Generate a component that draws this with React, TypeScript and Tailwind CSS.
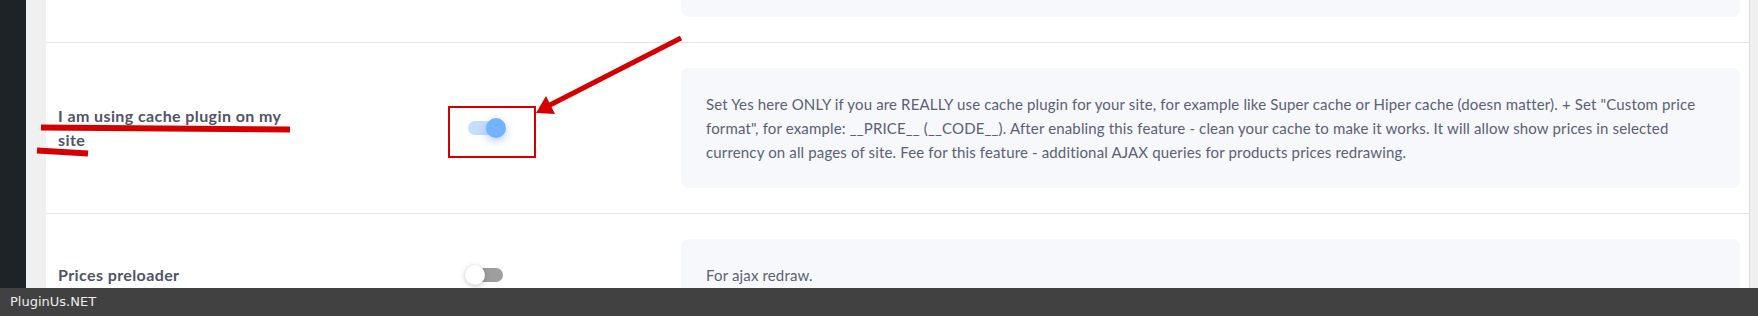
import React from "react";

function Toggle({ on }: { on: boolean }) {
  return (
    <div className="relative w-[41px] h-[20px] flex items-center">
      <div
        className={
          "ml-[3px] w-[35px] h-[14px] rounded-full " +
          (on ? "bg-[#c5ddfe]" : "bg-[#9e9e9e]")
        }
      />
      <div
        className={
          "absolute top-0 w-[20px] h-[20px] rounded-full " +
          (on
            ? "right-0 bg-[#72b2ff] shadow-[0_3px_8px_rgba(90,140,255,0.45)]"
            : "left-0 bg-white shadow-[0_1px_5px_rgba(0,0,0,0.25)]")
        }
      />
    </div>
  );
}

function Row({
  label,
  on,
  children,
}: {
  label: string;
  on: boolean;
  children: React.ReactNode;
}) {
  return (
    <div className="flex items-center py-[25px] border-b border-[#e3e3e3]">
      <div className="w-[419px] shrink-0 pl-[12px]">
        <div className="max-w-[238px] text-[16px] tracking-[0.4px] leading-[24px] font-bold text-[#4f5468]">
          {label}
        </div>
      </div>
      <div className="shrink-0">
        <Toggle on={on} />
      </div>
      <div className="ml-auto mr-[9px] w-[1059px] shrink-0 rounded-[8px] bg-[#f6f8fb] px-[25px] py-[24px] text-[15px] tracking-[0.15px] leading-[24px] text-[#5b6077]">
        {children}
      </div>
    </div>
  );
}

export default function App() {
  return (
    <div
      className="relative w-[1758px] h-[316px] overflow-hidden bg-white"
      style={{ fontFamily: "Lato, 'Open Sans', sans-serif" }}
    >
      <div className="flex h-full">
        <div className="w-[26px] shrink-0 bg-[#1d2327]" />
        <div className="w-[20px] shrink-0 bg-[#f0f0f1]" />
        <div className="flex-1 bg-white border-r border-[#dcdcde]">
          <div className="pb-[25px] border-b border-[#e3e3e3] flex">
            <div className="ml-auto mr-[9px] w-[1059px] h-[17px] rounded-b-[8px] bg-[#f6f8fb]" />
          </div>
          <Row label="I am using cache plugin on my site" on={true}>
            Set Yes here ONLY if you are REALLY use cache plugin for your site, for example like Super cache or Hiper cache (doesn matter). + Set "Custom price format", for example: __PRICE__ (__CODE__). After enabling this feature - clean your cache to make it works. It will allow show prices in selected currency on all pages of site. Fee for this feature - additional AJAX queries for products prices redrawing.
          </Row>
          <Row label="Prices preloader" on={false}>
            For ajax redraw.
          </Row>
        </div>
        <div className="w-[8px] shrink-0 bg-[#f0f0f1]" />
      </div>

      <svg
        className="absolute inset-0 pointer-events-none"
        width="1758"
        height="316"
        viewBox="0 0 1758 316"
      >
        <line x1="41" y1="127.5" x2="290" y2="129.5" stroke="#d40000" strokeWidth="6" />
        <line x1="37" y1="150.5" x2="88" y2="153.5" stroke="#d40000" strokeWidth="6" />
        <rect x="449" y="107" width="86" height="50" fill="none" stroke="#d40000" strokeWidth="2" />
        <line x1="681" y1="38" x2="548" y2="106" stroke="#d40000" strokeWidth="5" />
        <polygon points="536,113 546,96 555,114" fill="#d40000" />
      </svg>

      <div className="absolute left-0 right-0 bottom-0 h-[28px] bg-[#414141] flex items-center pl-[10px]">
        <span
          className="text-[13px] text-[#eeeeee]"
          style={{ fontFamily: "'DejaVu Sans', sans-serif" }}
        >
          PluginUs.NET
        </span>
      </div>
    </div>
  );
}
